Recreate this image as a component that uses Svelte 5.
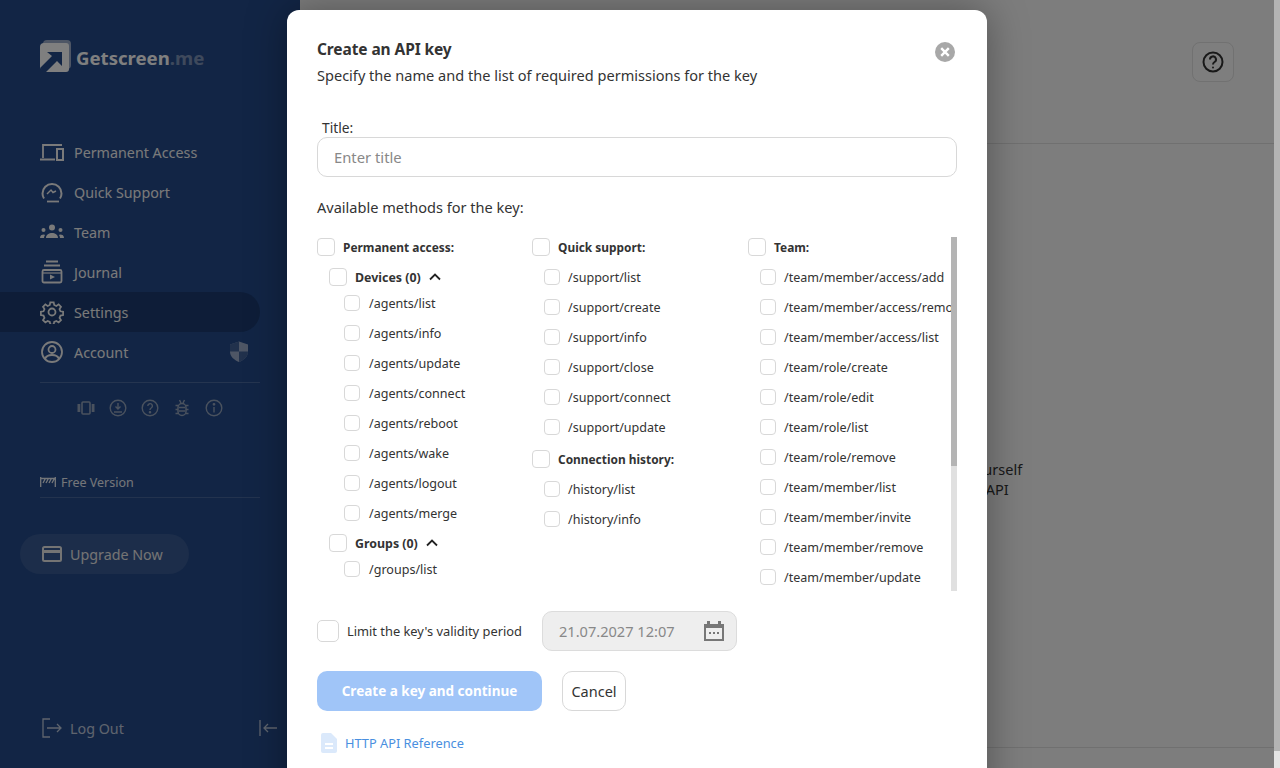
<script lang="ts">
  const nav = [
    { label: 'Permanent Access', icon: 'devices' },
    { label: 'Quick Support', icon: 'support' },
    { label: 'Team', icon: 'team' },
    { label: 'Journal', icon: 'journal' },
    { label: 'Settings', icon: 'gear', active: true },
    { label: 'Account', icon: 'account' }
  ];
  const devices = ['list', 'info', 'update', 'connect', 'reboot', 'wake', 'logout', 'merge'].map((m) => '/agents/' + m);
  const support = ['list', 'create', 'info', 'close', 'connect', 'update'].map((m) => '/support/' + m);
  const history = ['/history/list', '/history/info'];
  const team = [
    '/team/member/access/add',
    '/team/member/access/remove',
    '/team/member/access/list',
    '/team/role/create',
    '/team/role/edit',
    '/team/role/list',
    '/team/role/remove',
    '/team/member/list',
    '/team/member/invite',
    '/team/member/remove',
    '/team/member/update'
  ];
</script>

{#snippet navIcon(name)}
  <svg class="nav-icon" viewBox="0 0 24 24" fill="none" stroke="currentColor" stroke-width="1.8">
    {#if name === 'devices'}
      <path d="M3 18V5h19M0 19.500h15" /><rect x="17" y="9" width="6" height="11" stroke-width="2" />
    {:else if name === 'support'}
      <path d="M4 18.500c-1-1.500-1.500-3-1.500-5a9.500 9.500 0 0 1 19 0c0 2-.5 3.500-1.500 5" stroke-width="2" /><path d="M7 21.500h12" stroke-width="1.800" /><path d="M7 14l4-4 2 2.500 3-1.500" stroke-width="1.400" />
    {:else if name === 'team'}
      <g fill="currentColor" stroke="none"><circle cx="12" cy="7.500" r="3" /><circle cx="3.500" cy="10" r="2" /><circle cx="20.500" cy="10" r="2" /><path d="M6 18c0-3.500 3-5 6-5s6 1.500 6 5zM0 18c0-2.500 1.500-3.500 4-3.500l1 .5c-.7 1-1 2-1 3zM24 18c0-2.500-1.500-3.500-4-3.500l-1 .5c.7 1 1 2 1 3z" /></g>
    {:else if name === 'journal'}
      <path d="M6 1.500h12M4 5.500h16" /><rect x="2.500" y="10" width="19" height="12.500" rx="1.500" /><path d="M2.500 13h19" stroke-width="1.200" /><path d="M10 14.500l5 2.500-5 2.500z" fill="currentColor" stroke="none" />
    {:else if name === 'gear'}
      <circle cx="12" cy="12" r="3.500" />
      <path d="M10.200 1.800h3.600l.5 2.800 2.300 1 2.400-1.600 2.500 2.500-1.600 2.400 1 2.300 2.800.5v3.600l-2.800.5-1 2.300 1.600 2.400-2.500 2.500-2.400-1.600-2.300 1-.5 2.800h-3.600l-.5-2.800-2.300-1-2.400 1.600-2.500-2.500 1.600-2.400-1-2.300-2.800-.5v-3.600l2.800-.5 1-2.300-1.600-2.400 2.500-2.500 2.400 1.600 2.300-1z" transform="translate(.6 .6) scale(.95)" />
    {:else if name === 'account'}
      <circle cx="12" cy="12" r="10" /><circle cx="12" cy="9.500" r="3.500" /><path d="M5 19c1-3 4-4 7-4s6 1 7 4" />
    {/if}
  </svg>
{/snippet}

{#snippet check(label, size = 'sm')}
  <label class="row {size}"><span class="box"></span><span class="name">{label}</span></label>
{/snippet}

<div class="page">
  <aside class="sidebar">
    <div class="logo">
      <svg width="31" height="32" viewBox="0 0 31 32">
        <rect x="3" y="0" width="28" height="29" rx="4" fill="#fff" opacity=".55" />
        <path d="M4 3h22a3 3 0 0 1 3 3v23a3 3 0 0 1-3 3H5l-5-4V7a4 4 0 0 1 4-4z" fill="#fff" />
        <path d="M7 12h15v14l-5-5-11 11H3l-3-4 12-12z" fill="#244a8a" />
      </svg>
      <span class="brand">Getscreen<span class="tld">.me</span></span>
    </div>

    <nav>
      {#each nav as item}
        <div class="nav-row" class:active={item.active}>
          {@render navIcon(item.icon)}
          <span>{item.label}</span>
          {#if item.icon === 'account'}
            <svg class="shield" width="18" height="21" viewBox="0 0 18 21">
              <path d="M9 .5l9 3v7c0 5-4 8.500-9 10.500-5-2-9-5.500-9-10.500v-7z" fill="#fff" />
              <path d="M9 .5v10H0v-7zM9 10.500h9c0 5-4 8.500-9 10.500z" fill="#244a8a" opacity=".75" />
            </svg>
          {/if}
        </div>
      {/each}
    </nav>

    <div class="tools">
      <svg viewBox="0 0 18 18" fill="currentColor"><rect x="5" y="3" width="8" height="12" rx="1" fill="none" stroke="currentColor" stroke-width="1.600" /><rect x="0.500" y="5" width="2.800" height="8" /><rect x="14.700" y="5" width="2.800" height="8" /></svg>
      <svg viewBox="0 0 18 18" fill="none" stroke="currentColor" stroke-width="1.400"><circle cx="9" cy="9" r="7.800" /><path d="M9 4v6M6.500 7.500L9 10l2.500-2.500M5 13h8" /></svg>
      <svg viewBox="0 0 18 18" fill="none" stroke="currentColor" stroke-width="1.400"><circle cx="9" cy="9" r="7.800" /><path d="M6.800 7a2.300 2.300 0 1 1 3.400 2c-.9.500-1.200 1-1.200 2" /><circle cx="9" cy="13.200" r=".6" fill="currentColor" /></svg>
      <svg viewBox="0 0 18 18" fill="none" stroke="currentColor" stroke-width="1.500"><rect x="5" y="4.500" width="8" height="12" rx="4" /><path d="M6.500 1L8 4M11.500 1L10 4M2.500 6.500H5M2.500 10.500H5M2.500 14.500H5M13 6.500h2.500M13 10.500h2.500M13 14.500h2.500M6 8.500h6M6 12h6" /></svg>
      <svg viewBox="0 0 18 18" fill="none" stroke="currentColor" stroke-width="1.400"><circle cx="9" cy="9" r="7.800" /><path d="M9 8v5.500" /><circle cx="9" cy="5.300" r=".7" fill="currentColor" /></svg>
    </div>

    <div class="plan">
      <svg width="16" height="10" viewBox="0 0 16 10" fill="none" stroke="currentColor" stroke-width="1.300"><path d="M.7 0v10M15.300 0v10M.7 1.500h14.600M3 6l2.400-4.500M6 6l2.400-4.500M9 6l2.400-4.500M12 6l2.400-4.500" /></svg>
      <span>Free Version</span>
    </div>

    <div class="upgrade">
      <svg width="20" height="16" viewBox="0 0 20 16" fill="none" stroke="currentColor" stroke-width="2"><rect x="1" y="1" width="18" height="14" rx="1.500" /><path d="M1 5.500h18" stroke-width="3" /></svg>
      <span>Upgrade Now</span>
    </div>

    <div class="logout">
      <svg width="20" height="20" viewBox="0 0 20 20" fill="none" stroke="currentColor" stroke-width="1.300"><path d="M8 1H1v18h7M5 10h14M15 6l4 4-4 4" /></svg>
      <span>Log Out</span>
      <svg class="collapse" width="19" height="16" viewBox="0 0 19 16" fill="none" stroke="currentColor" stroke-width="1.300"><path d="M1 0v16M18 8H5M9 4L5 8l4 4" /></svg>
    </div>
  </aside>

  <main>
    <header>
      <div class="help">
        <svg width="22" height="22" viewBox="0 0 22 22" fill="none" stroke="currentColor" stroke-width="2"><circle cx="11" cy="11" r="9.500" /><path d="M8 8.500a3 3 0 1 1 4.500 2.500c-1 .6-1.500 1.200-1.500 2.500" /><circle cx="11" cy="16.500" r="1" fill="currentColor" stroke="none" /></svg>
      </div>
    </header>
    <div class="empty">
      <p>Integrate the service to your own systems or create a tool by yourself</p>
      <p>Use the methods of our service through the convenient HTTP API</p>
    </div>
    <footer></footer>
  </main>

  <div class="overlay"></div>

  <div class="page-scroll"><div class="page-thumb"></div></div>

  <div class="modal">
    <button class="close" aria-label="Close">
      <svg width="20" height="20" viewBox="0 0 20 20"><circle cx="10" cy="10" r="10" fill="#a8a8a8" /><path d="M6.200 6.200l7.600 7.600M13.800 6.200l-7.600 7.600" stroke="#fff" stroke-width="2.400" /></svg>
    </button>
    <h2>Create an API key</h2>
    <p class="sub">Specify the name and the list of required permissions for the key</p>

    <div class="field-label">Title:</div>
    <div class="input">Enter title</div>

    <div class="avail">Available methods for the key:</div>

    <div class="methods">
      <div class="cols">
        <div class="col">
          {@render check('Permanent access:', 'head')}
          <div class="group">
            <div class="group-head">
              {@render check('Devices (0)', 'head')}
              <svg width="12" height="8" viewBox="0 0 12 8" fill="none" stroke="#222" stroke-width="1.800"><path d="M1 6.500l5-5 5 5" /></svg>
            </div>
            <div class="items">
              {#each devices as m}{@render check(m)}{/each}
            </div>
            <div class="group-head second">
              {@render check('Groups (0)', 'head')}
              <svg width="12" height="8" viewBox="0 0 12 8" fill="none" stroke="#222" stroke-width="1.800"><path d="M1 6.500l5-5 5 5" /></svg>
            </div>
            <div class="items">
              {@render check('/groups/list')}
            </div>
          </div>
        </div>
        <div class="col">
          {@render check('Quick support:', 'head')}
          <div class="plain">
            {#each support as m}{@render check(m)}{/each}
          </div>
          {@render check('Connection history:', 'head')}
          <div class="plain">
            {#each history as m}{@render check(m)}{/each}
          </div>
        </div>
        <div class="col">
          {@render check('Team:', 'head')}
          <div class="plain">
            {#each team as m}{@render check(m)}{/each}
          </div>
        </div>
      </div>
      <div class="track"><div class="thumb"></div></div>
    </div>

    <div class="limit">
      <span class="box big"></span>
      <span class="limit-text">Limit the key's validity period</span>
      <div class="date">
        <span>21.07.2027 12:07</span>
        <svg width="20" height="20" viewBox="0 0 20 20" fill="#777"><path d="M0 3h3V0h3v3h8V0h3v3h3v17H0zM2 7v11h16V7z" /><rect x="5" y="11" width="2" height="2" /><rect x="9" y="11" width="2" height="2" /><rect x="13" y="11" width="2" height="2" /></svg>
      </div>
    </div>

    <div class="actions">
      <button class="primary">Create a key and continue</button>
      <button class="cancel">Cancel</button>
    </div>

    <div class="ref">
      <svg width="16" height="20" viewBox="0 0 16 20"><path d="M2 0h8l6 6v12a2 2 0 0 1-2 2H2a2 2 0 0 1-2-2V2a2 2 0 0 1 2-2z" fill="#dbe9fb" /><path d="M4 11h8M4 15h8" stroke="#fff" stroke-width="2" /></svg>
      <span>HTTP API Reference</span>
    </div>
  </div>
</div>

<style>
  :global(body) {
    margin: 0;
    overflow: hidden;
    font-family: "Noto Sans", "Open Sans", sans-serif;
  }
  .page {
    position: relative;
    display: grid;
    grid-template-columns: 300px 1fr 6px;
    width: 1280px;
    height: 768px;
    overflow: hidden;
    background: #fafafa;
    color: #222;
  }
  .sidebar {
    display: flex;
    flex-direction: column;
    background: #244a8a;
    color: #fff;
    height: 768px;
    font-size: 14.300px;
    box-sizing: border-box;
    padding-top: 40px;
  }
  .logo {
    display: flex;
    align-items: center;
    gap: 5px;
    margin-left: 40px;
    height: 32px;
    color: #fff;
  }
  .brand {
    font-size: 18.600px;
    font-weight: 700;
    padding-top: 2px;
  }
  .tld {
    opacity: 0.4;
  }
  nav {
    margin-top: 60px;
  }
  .nav-row {
    display: flex;
    align-items: center;
    height: 40px;
    width: 260px;
    box-sizing: border-box;
    padding-left: 40px;
    gap: 10px;
    border-radius: 0 20px 20px 0;
    position: relative;
    color: #f4f4f4;
  }
  .nav-row.active {
    background: #1c3b70;
  }
  .nav-icon {
    width: 24px;
    height: 24px;
    flex: none;
  }
  .shield {
    position: absolute;
    right: 12px;
    top: 9px;
    opacity: 0.55;
  }
  .tools {
    display: flex;
    justify-content: center;
    gap: 14px;
    width: 220px;
    margin: 10px 0 0 40px;
    padding: 16px 0 0;
    border-top: 1px solid #4a6aa0;
    color: #94a4bc;
    height: 18px;
  }
  .tools svg {
    width: 18px;
    height: 18px;
  }
  .plan {
    display: flex;
    align-items: center;
    gap: 5px;
    width: 220px;
    margin: 51px 0 0 40px;
    height: 30px;
    box-sizing: border-box;
    padding-bottom: 1px;
    border-bottom: 1px solid #4a6aa0;
    font-size: 12.500px;
    opacity: 0.9;
  }
  .upgrade {
    display: flex;
    align-items: center;
    gap: 8px;
    width: 169px;
    height: 40px;
    box-sizing: border-box;
    padding-left: 22px;
    margin: 36px 0 0 20px;
    border-radius: 20px;
    background: #385a94;
    color: #e8e8e8;
  }
  .logout {
    display: flex;
    align-items: center;
    gap: 8px;
    margin: auto 0 30px 42px;
    opacity: 0.7;
    width: 236px;
  }
  .collapse {
    margin-left: auto;
  }
  main {
    grid-column: 2;
    min-width: 0;
    position: relative;
  }
  header {
    height: 144px;
    border-bottom: 1px solid #e0e0e0;
    display: flex;
    justify-content: flex-end;
    padding: 42px 40px 0 0;
    box-sizing: border-box;
  }
  .help {
    width: 42px;
    height: 40px;
    box-sizing: border-box;
    border: 1px solid #e2e2e2;
    border-radius: 8px;
    display: flex;
    align-items: center;
    justify-content: center;
    color: #333;
    background: #fcfcfc;
  }
  .empty {
    margin: 315px 0 0 0;
    text-align: center;
    font-size: 14.500px;
    line-height: 20px;
    color: #333;
    white-space: nowrap;
  }
  .empty p {
    margin: 0;
  }
  footer {
    position: absolute;
    left: 0;
    right: 0;
    top: 747px;
    border-top: 1px solid #e0e0e0;
  }
  .overlay {
    position: absolute;
    inset: 0;
    background: rgba(0, 0, 0, 0.5);
  }
  .page-scroll {
    position: absolute;
    right: 0;
    top: 0;
    width: 6px;
    height: 768px;
    background: #e4e4e4;
  }
  .page-thumb {
    height: 751px;
    background: #b4b4b4;
  }
  .modal {
    position: absolute;
    left: 287px;
    top: 10px;
    width: 700px;
    height: 800px;
    box-sizing: border-box;
    padding: 29px 30px 0;
    background: #fff;
    border-radius: 12px;
    box-shadow: 0 0 40px rgba(0, 0, 0, 0.35);
    font-size: 13px;
    color: #333;
  }
  .close {
    position: absolute;
    right: 32px;
    top: 32px;
    padding: 0;
    border: 0;
    background: none;
    line-height: 0;
  }
  h2 {
    margin: 0;
    font-size: 15.500px;
    line-height: 20px;
    font-weight: 700;
    letter-spacing: -0.1px;
  }
  .sub {
    margin: 6px 0 0;
    line-height: 20px;
    font-size: 14.550px;
  }
  .field-label {
    margin: 33px 0 0 5px;
    line-height: 19px;
    font-size: 13.800px;
  }
  .input {
    height: 40px;
    box-sizing: border-box;
    border: 1px solid #d8d8d8;
    border-radius: 10px;
    padding-left: 16px;
    line-height: 38px;
    color: #888;
    font-size: 14.800px;
  }
  .avail {
    margin-top: 20px;
    line-height: 20px;
    font-size: 14.550px;
  }
  .methods {
    position: relative;
    height: 354px;
    margin-top: 20px;
    overflow: hidden;
  }
  .cols {
    display: grid;
    grid-template-columns: 215px 216px 203px;
    height: 354px;
    overflow: hidden;
  }
  .col {
    min-width: 0;
    white-space: nowrap;
  }
  .row {
    display: flex;
    align-items: center;
    height: 30px;
  }
  .box {
    flex: none;
    box-sizing: border-box;
    width: 16px;
    height: 16px;
    border: 1px solid #d8d8d8;
    border-radius: 4px;
    background: #fff;
  }
  .row.sm .name {
    font-size: 12.550px;
  }
  .row.sm .box {
    margin-right: 8px;
  }
  .items .row.sm .box {
    margin-right: 9px;
  }
  .row.head {
    height: 20px;
    font-weight: 700;
    font-size: 11.900px;
  }
  .row.head .box {
    width: 18px;
    height: 18px;
    margin-right: 8px;
  }
  .group {
    padding-left: 12px;
  }
  .group-head {
    display: flex;
    align-items: center;
    gap: 8px;
    margin-top: 10px;
  }
  .group-head .row.head {
    font-size: 12.400px;
  }
  .group-head.second {
    margin-top: 5px;
  }
  .items {
    padding-left: 15px;
    margin-top: 1px;
  }
  .plain {
    padding-left: 12px;
    margin-top: 5px;
    margin-bottom: 7px;
  }
  .track {
    position: absolute;
    right: 0;
    top: 0;
    width: 6px;
    height: 354px;
    background: #e0e0e0;
  }
  .thumb {
    height: 229px;
    background: #b4b4b4;
  }
  .limit {
    display: flex;
    align-items: center;
    margin-top: 20px;
    height: 40px;
  }
  .box.big {
    width: 22px;
    height: 22px;
    border-radius: 5px;
  }
  .limit-text {
    margin-left: 8px;
    font-size: 12.850px;
  }
  .date {
    margin-left: 20px;
    width: 195px;
    height: 40px;
    box-sizing: border-box;
    border: 1px solid #dcdcdc;
    border-radius: 10px;
    background: #eee;
    display: flex;
    align-items: center;
    justify-content: space-between;
    padding: 0 12px 0 16px;
    color: #888;
    font-size: 14.600px;
  }
  .actions {
    display: flex;
    gap: 20px;
    margin-top: 20px;
  }
  button {
    font-family: inherit;
  }
  .primary {
    width: 225px;
    height: 40px;
    border: 0;
    border-radius: 10px;
    background: #a0c5f8;
    color: #fff;
    font-weight: 700;
    font-size: 13.500px;
  }
  .cancel {
    width: 64px;
    height: 40px;
    border: 1px solid #d8d8d8;
    border-radius: 10px;
    background: #fff;
    color: #333;
    font-size: 14.500px;
    padding: 0;
  }
  .ref {
    display: flex;
    align-items: center;
    gap: 8px;
    margin: 22px 0 0 4px;
    color: #4a8fe0;
    font-size: 12.800px;
  }
</style>
